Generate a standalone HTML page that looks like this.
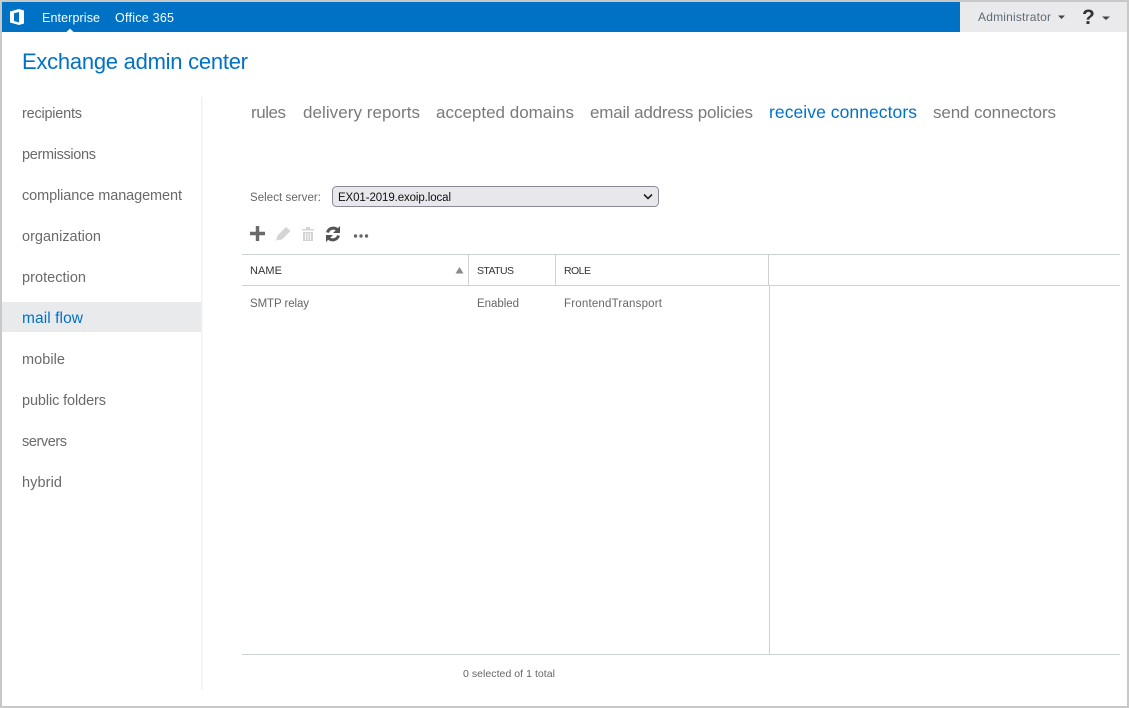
<!DOCTYPE html>
<html><head><meta charset="utf-8"><title>Exchange admin center</title>
<style>
html,body{margin:0;padding:0;background:#fff;width:1129px;height:708px;overflow:hidden}
svg{display:block;position:absolute;left:0;top:0}
text{font-family:"Liberation Sans",sans-serif}
.n{font-size:14.500px;fill:#6a6a6a}
.t{font-size:17px;fill:#7a7a7a}
.h{font-size:10.500px;fill:#333}
.c{font-size:11.500px;fill:#666}
</style></head><body>
<svg width="1129" height="708" viewBox="0 0 1129 708" xmlns="http://www.w3.org/2000/svg">
<rect width="1129" height="708" fill="#c8c8c8"/>
<rect x="2" y="2" width="1125" height="704" fill="#fff"/>
<rect x="2" y="2" width="958" height="30" fill="#0072c6"/>
<rect x="960" y="2" width="167" height="30" fill="#eaeaec"/>
<path d="M66.500 32L70 28.500L73.500 32Z" fill="#fff"/>
<path d="M10 11.500L19 9L24 10.500V23.500L19 25L10 22.500ZM14 13.200V21L19 22.500V12Z" fill="#fff" fill-rule="evenodd"/>
<text x="42" y="22" font-size="12.500" fill="#fff" textLength="58">Enterprise</text>
<text x="115" y="22" font-size="12.500" fill="#fff" textLength="59">Office 365</text>
<text x="978" y="21" font-size="12" fill="#5f6b78" textLength="73">Administrator</text>
<path d="M1058 15.500H1065L1061.500 19Z" fill="#444"/>
<text x="1082" y="24" font-size="21" font-weight="bold" fill="#333" textLength="12">?</text>
<path d="M1102 16.500H1110L1106 20Z" fill="#444"/>
<text x="22" y="69" font-size="22" fill="#0072c6" textLength="226">Exchange admin center</text>
<rect x="2" y="302" width="199" height="30" fill="#e9eaec"/>
<rect x="201" y="97" width="1.500" height="593" fill="#f1f1f1"/>
<text class="n" x="22" y="118" textLength="60">recipients</text>
<text class="n" x="22" y="159" textLength="74">permissions</text>
<text class="n" x="22" y="200" textLength="160">compliance management</text>
<text class="n" x="22" y="241" textLength="79">organization</text>
<text class="n" x="22" y="282" textLength="64">protection</text>
<text class="n" x="22" y="323" textLength="61" style="fill:#0072c6;font-size:15.500px">mail flow</text>
<text class="n" x="22" y="364" textLength="43">mobile</text>
<text class="n" x="22" y="405" textLength="84">public folders</text>
<text class="n" x="22" y="446" textLength="45">servers</text>
<text class="n" x="22" y="487" textLength="40">hybrid</text>
<text class="t" x="251" y="118" textLength="35">rules</text>
<text class="t" x="303" y="118" textLength="117">delivery reports</text>
<text class="t" x="436" y="118" textLength="138">accepted domains</text>
<text class="t" x="590" y="118" textLength="163">email address policies</text>
<text class="t" x="769" y="118" textLength="148" style="fill:#0072c6;font-size:17.500px">receive connectors</text>
<text class="t" x="933" y="118" textLength="123">send connectors</text>
<text class="c" x="250" y="201" textLength="71">Select server:</text>
<rect x="332.500" y="186.500" width="326" height="20" rx="4" fill="#e8e8ec" stroke="#8a8a96"/>
<text x="338" y="201" font-size="11.500" fill="#111" textLength="113">EX01-2019.exoip.local</text>
<path d="M644 194.500L648 198.500L652 194.500" fill="none" stroke="#222" stroke-width="1.600"/>
<path d="M250 233.500H265M257.500 226V241" stroke="#6a6a6a" stroke-width="3.400" fill="none"/>
<path d="M276 240.500L277.500 235.500L286 227L290.500 231L282 239.500Z" fill="#d4d4d4"/>
<path d="M302 229H314V230.500H302ZM306 227H310V229H306ZM303 232H313V241H303Z" fill="#d4d4d4"/>
<path d="M305.500 233V240M308 233V240M310.500 233V240" stroke="#fff" stroke-width=".8"/>
<path d="M327.500 232.500A6 6 0 0 1 338 230.500" fill="none" stroke="#555" stroke-width="3"/>
<path d="M340 226V233H333Z" fill="#555"/>
<path d="M338.500 235.500A6 6 0 0 1 328 237.500" fill="none" stroke="#555" stroke-width="3"/>
<path d="M326 242V235H333Z" fill="#555"/>
<circle cx="355.500" cy="236" r="1.700" fill="#666"/><circle cx="361" cy="236" r="1.700" fill="#666"/><circle cx="366.500" cy="236" r="1.700" fill="#666"/>
<g fill="#cdd0d4">
<rect x="242" y="254" width="878" height="1"/>
<rect x="242" y="285" width="878" height="1"/>
<rect x="242" y="654" width="878" height="1"/>
<rect x="468" y="255" width="1" height="30"/>
<rect x="555" y="255" width="1" height="30"/>
<rect x="768" y="255" width="1" height="30"/>
<rect x="769" y="286" width="1" height="368"/>
</g>
<text class="h" x="250" y="274" textLength="32" style="font-size:11px">NAME</text>
<path d="M455.500 273.500L459.500 267L463.500 273.500Z" fill="#8a8a8a"/>
<text class="h" x="477" y="274" textLength="37">STATUS</text>
<text class="h" x="564" y="274" textLength="27">ROLE</text>
<text class="c" x="250" y="307" textLength="59">SMTP relay</text>
<text class="c" x="477" y="307" textLength="42">Enabled</text>
<text class="c" x="564" y="307" textLength="98">FrontendTransport</text>
<text x="463" y="677" font-size="10.500" fill="#666" textLength="92">0 selected of 1 total</text>
</svg>
</body></html>
